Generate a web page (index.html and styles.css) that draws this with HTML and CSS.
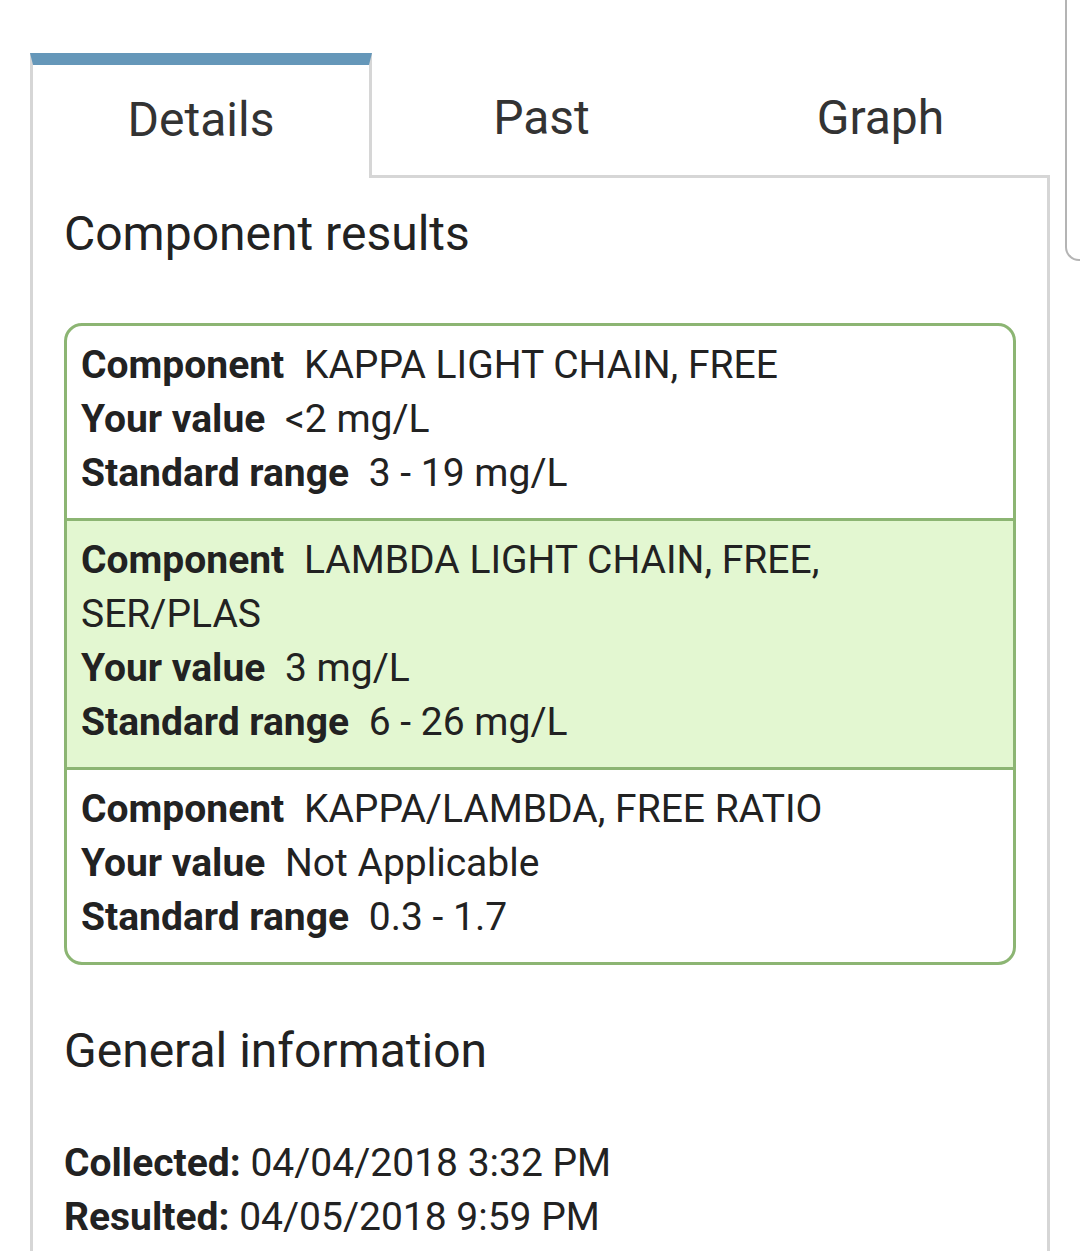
FILE: index.html
```html
<!DOCTYPE html>
<html lang="en">
<head>
<meta charset="utf-8">
<title>Test result details</title>
<link rel="stylesheet" href="styles.css">
</head>
<body>
<div class="page">
  <div class="panel">
    <div class="tabs">
      <div class="tab active">Details</div>
      <div class="tab">Past</div>
      <div class="tab">Graph</div>
    </div>
    <div class="body">
      <h2 class="heading first">Component results</h2>
      <div class="card">
        <div class="row">
          <div class="line"><span class="label">Component</span> KAPPA LIGHT CHAIN, FREE</div>
          <div class="line"><span class="label">Your value</span> &lt;2 mg/L</div>
          <div class="line"><span class="label">Standard range</span> 3 - 19 mg/L</div>
        </div>
        <div class="row flagged">
          <div class="line"><span class="label">Component</span> LAMBDA LIGHT CHAIN, FREE, SER/PLAS</div>
          <div class="line"><span class="label">Your value</span> 3 mg/L</div>
          <div class="line"><span class="label">Standard range</span> 6 - 26 mg/L</div>
        </div>
        <div class="row">
          <div class="line"><span class="label">Component</span> KAPPA/LAMBDA, FREE RATIO</div>
          <div class="line"><span class="label">Your value</span> Not Applicable</div>
          <div class="line"><span class="label">Standard range</span> 0.3 - 1.7</div>
        </div>
      </div>
      <h2 class="heading second">General information</h2>
      <div class="info">
        <div class="line"><span class="key">Collected:</span> 04/04/2018 3:32 PM</div>
        <div class="line"><span class="key">Resulted:</span> 04/05/2018 9:59 PM</div>
      </div>
    </div>
  </div>
  <div class="peek"></div>
</div>
</body>
</html>
```
FILE: styles.css
```css
html, body {
  margin: 0;
  padding: 0;
  background: #ffffff;
  height: 1251px;
  overflow: hidden;
}

body {
  font-family: Roboto, "Noto Sans", "Liberation Sans", sans-serif;
  color: #222222;
}

.page {
  display: flex;
  align-items: flex-start;
}

.panel {
  margin: 53px 0 0 30px;
  width: 1020px;
  flex-shrink: 0;
}

.tabs {
  display: flex;
}

.tab {
  flex: 1 1 0;
  box-sizing: border-box;
  height: 125px;
  padding-top: 37px;
  text-align: center;
  font-size: 48px;
  line-height: 56px;
  color: #333333;
  border-bottom: 3px solid #d6d6d6;
}

.tab.active {
  flex: 0 0 342px;
  padding-top: 27px;
  border-top: 12px solid #6597b9;
  border-left: 3px solid #d6d6d6;
  border-right: 3px solid #d6d6d6;
  border-bottom: none;
}

.body {
  border-left: 3px solid #d6d6d6;
  border-right: 3px solid #d6d6d6;
  padding: 0 31px 40px 31px;
}

.heading {
  margin: 0;
  font-size: 48px;
  line-height: 54px;
  font-weight: 400;
  color: #222222;
}

.heading.first {
  padding-top: 29px;
}

.card {
  margin-top: 62px;
  border: 3px solid #8cb573;
  border-radius: 18px;
  overflow: hidden;
}

.row {
  padding: 12px 16px 18px 14px;
}

.row + .row {
  border-top: 3px solid #8cb573;
}

.row.flagged {
  background: #e3f7d1;
}

.line {
  font-size: 39px;
  line-height: 54px;
}

.label {
  font-weight: 700;
  margin-right: 10px;
}

.heading.second {
  margin-top: 59px;
}

.info {
  margin-top: 58px;
}

.key {
  font-weight: 700;
}

.peek {
  flex-shrink: 0;
  box-sizing: border-box;
  margin-left: 15px;
  width: 40px;
  height: 261px;
  border-left: 2px solid #b4b4b4;
  border-bottom: 2px solid #b4b4b4;
  border-bottom-left-radius: 14px;
}
```
